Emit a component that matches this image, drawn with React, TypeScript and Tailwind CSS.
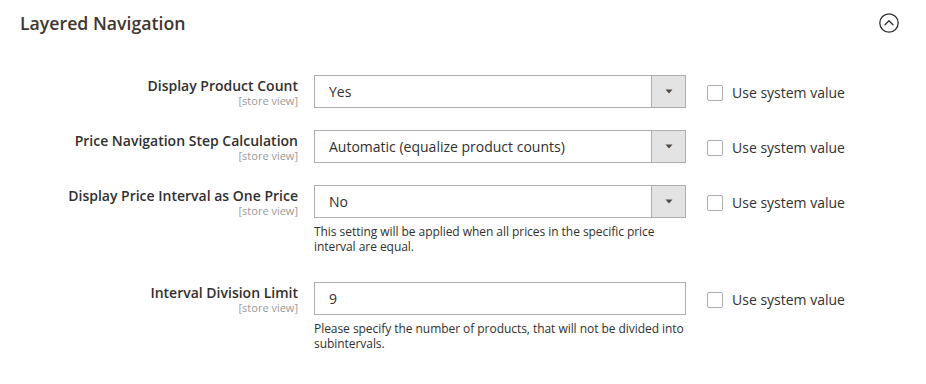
import React from 'react';

interface FieldProps {
  label: string;
  scope?: string;
  value: string;
  kind: 'select' | 'text';
  note?: string;
  className?: string;
}

/**
 * Checkbox "Use system value"
 */
const SystemValue = () => (
  <label className="ml-[21px] mt-[9px] flex items-center">
    <span className="block h-[16px] w-[16px] rounded-[2px] border border-[#adadad] bg-white" />
    <span className="ml-[9px] text-[14px] leading-[18px] text-[#303030]">Use system value</span>
  </label>
);

const Field = ({ label, scope = '[store view]', value, kind, note, className = '' }: FieldProps) => (
  <div className={`flex items-start ${className}`}>
    {/* Label + scope */}
    <div className="w-[298px] pt-[2px] text-right">
      <div className="text-[14px] font-semibold leading-[18px] text-[#303030]">{label}</div>
      <div className="text-[11px] leading-[12px] text-[#999999]">{scope}</div>
    </div>

    {/* Control */}
    <div className="ml-[16px] w-[372px]">
      <div className="flex h-[33px] items-stretch border border-[#adadad] bg-white">
        <div className="flex flex-1 items-center pl-[14px] text-[14px] text-[#303030]">{value}</div>
        {kind === 'select' && (
          <div className="flex w-[34px] items-center justify-center border-l border-[#adadad] bg-[#e3e3e3]">
            <svg width="8" height="5" viewBox="0 0 8 5">
              <path d="M0.5 0.5 H7.5 L4 4.5 Z" fill="#514943" />
            </svg>
          </div>
        )}
      </div>
      {note && (
        <p className="mr-[-6px] mt-[7px] text-[12px] leading-[14.5px] tracking-[-0.05px] text-[#303030]">{note}</p>
      )}
    </div>

    <SystemValue />
  </div>
);

export default function App() {
  return (
    <div className="min-h-screen w-full bg-white font-['Open_Sans',sans-serif]">
      {/* Cabecera de la sección */}
      <div className="flex items-start justify-between pl-[20px] pr-[26px] pt-[11px]">
        <h2 className="text-[17.7px] font-semibold leading-[24px] text-[#41362f]">Layered Navigation</h2>
        <svg width="22" height="22" viewBox="0 0 22 22" className="mt-[1px]">
          <circle cx="11" cy="11" r="9.2" fill="none" stroke="#303030" strokeWidth="1.3" />
          <path d="M7 12.8 L11 8.8 L15 12.8" fill="none" stroke="#303030" strokeWidth="1.3" strokeLinecap="round" strokeLinejoin="round" />
        </svg>
      </div>

      {/* Campos */}
      <div className="mt-[40px]">
        <Field className="mb-[22px]" label="Display Product Count" value="Yes" kind="select" />
        <Field
          className="mb-[22px]"
          label="Price Navigation Step Calculation"
          value="Automatic (equalize product counts)"
          kind="select"
        />
        <Field
          className="mb-[28px]"
          label="Display Price Interval as One Price"
          value="No"
          kind="select"
          note="This setting will be applied when all prices in the specific price interval are equal."
        />
        <Field
          label="Interval Division Limit"
          value="9"
          kind="text"
          note="Please specify the number of products, that will not be divided into subintervals."
        />
      </div>
    </div>
  );
}
